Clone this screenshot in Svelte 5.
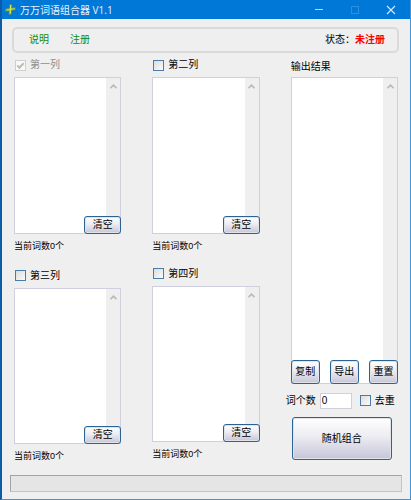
<script>
  let columns = $state([
    {
      id: "a",
      lists: [
        { id: "list1", title: "第一列", checked: true, disabled: true, text: "" },
        { id: "list3", title: "第三列", checked: false, disabled: false, text: "" },
      ],
    },
    {
      id: "b",
      lists: [
        { id: "list2", title: "第二列", checked: false, disabled: false, text: "" },
        { id: "list4", title: "第四列", checked: false, disabled: false, text: "" },
      ],
    },
  ])
  let output = $state("")
  let count = $state("0")
  let unique = $state(false)

  const words = text => text.split("\n").filter(line => line.trim())

  const combine = () => {
    const lists = columns
      .flatMap(column => column.lists)
      .filter(list => list.checked)
      .map(list => words(list.text))
      .filter(list => list.length)
    if (!lists.length) {
      return
    }
    let rows = Array.from({ length: Number(count) || 0 }, () =>
      lists.map(list => list[Math.floor(Math.random() * list.length)]).join("")
    )
    if (unique) {
      rows = [...new Set(rows)]
    }
    output = rows.join("\n")
  }

  const copy = () => navigator.clipboard?.writeText(output)

  const save = () => {
    const link = document.createElement("a")
    link.href = URL.createObjectURL(new Blob([output]))
    link.download = "output.txt"
    link.click()
  }

  const reset = () => {
    output = ""
    count = "0"
  }
</script>

{#snippet rail()}
  <span class="rail" aria-hidden="true">
    <svg width="7" height="5" viewBox="0 0 7 5">
      <path d="M0.5 4.2 L3.5 1.2 L6.5 4.2" fill="none" stroke="#b9b9b9" stroke-width="1.6" />
    </svg>
  </span>
{/snippet}

<div class="window">
  <header class="titlebar">
    <svg class="logo" width="11" height="11" viewBox="0 0 11 11">
      <path
        d="M4.6 0.6 L6.9 0.4 L6.8 3.9 L10.5 3.6 L10.4 5.8 L6.6 6.4 L6.2 10.4 L4 10.6 L4.1 6.9 L0.5 7.2 L0.6 5 L4.3 4.3 Z"
        fill="#b4cf4c"
        stroke="#4d8a4a"
        stroke-width="0.8"
      />
      <path d="M5.6 1.4 L5.2 9.2" stroke="#e6e98a" stroke-width="0.7" />
    </svg>
    <h1>万万词语组合器 V1.1</h1>
    <button class="caption" aria-label="最小化">
      <svg width="10" height="10" viewBox="0 0 10 10">
        <path d="M1 4.5 H9" stroke="#b5dcf8" />
      </svg>
    </button>
    <button class="caption" aria-label="最大化" disabled>
      <svg width="10" height="10" viewBox="0 0 10 10">
        <rect x="1.5" y="1.5" width="7" height="7" fill="none" stroke="#2c90e2" />
      </svg>
    </button>
    <button class="caption" aria-label="关闭">
      <svg width="10" height="10" viewBox="0 0 10 10">
        <path d="M1 1 L9 9 M9 1 L1 9" stroke="#d4eafb" stroke-width="1.1" />
      </svg>
    </button>
  </header>

  <nav class="toolbar">
    <a href="#help">说明</a>
    <a href="#register">注册</a>
    <span class="status">状态：<strong>未注册</strong></span>
  </nav>

  <main>
    {#each columns as column (column.id)}
      <div class="column {column.id}">
        {#each column.lists as list (list.id)}
          <section>
            <label class="heading check" class:disabled={list.disabled}>
              <input type="checkbox" bind:checked={list.checked} disabled={list.disabled} />
              {list.title}
            </label>
            <div class="field">
              <textarea aria-label={list.title} bind:value={list.text}></textarea>
              {@render rail()}
              <button class="push clear" onclick={() => (list.text = "")}>清空</button>
            </div>
            <p class="total">当前词数{words(list.text).length}个</p>
          </section>
        {/each}
      </div>
    {/each}

    <div class="result">
      <label class="heading output-label" for="output">输出结果</label>
      <div class="field">
        <textarea id="output" bind:value={output}></textarea>
        {@render rail()}
        <div class="actions">
          <button class="push" onclick={copy}>复制</button>
          <button class="push" onclick={save}>导出</button>
          <button class="push" onclick={reset}>重置</button>
        </div>
      </div>
      <div class="options">
        <label for="count">词个数</label>
        <input id="count" type="text" bind:value={count} />
        <label class="check">
          <input type="checkbox" bind:checked={unique} />
          去重
        </label>
      </div>
      <button class="push combine" onclick={combine}>随机组合</button>
    </div>
  </main>

  <div class="progress" role="progressbar" aria-label="进度" aria-valuenow="0"></div>
</div>

<style>
  :global(body) {
    background: #efefef;
  }

  .window {
    box-sizing: border-box;
    min-height: 100vh;
    display: flex;
    flex-direction: column;
    border: 1px solid #4294d6;
    border-top: 0;
    border-left: 2px solid #0b5ca6;
    background: #efefef;
    color: #000;
    font-family: "Liberation Sans", "Noto Sans CJK SC", sans-serif;
    font-size: 10px;
    line-height: 14px;
  }
  button,
  input,
  textarea {
    box-sizing: border-box;
    margin: 0;
    padding: 0;
    color: inherit;
    font: inherit;
  }

  /* Title bar */
  .titlebar {
    height: 19px;
    display: flex;
    align-items: center;
    padding: 0 1px 0 3px;
    background: #0078d7;
    color: #e6f3fd;
  }
  h1 {
    flex: 1;
    margin: 0 0 0 4px;
    font-family: "Open Sans", "Noto Sans CJK SC", sans-serif;
    font-size: 10px;
    font-weight: 400;
    line-height: 16px;
    white-space: nowrap;
  }
  .caption {
    width: 36px;
    height: 18px;
    display: flex;
    align-items: center;
    justify-content: center;
    border: 0;
    background: none;
  }

  /* Toolbar */
  .toolbar {
    display: flex;
    align-items: center;
    margin: 8px 11px 0 10px;
    padding: 4px 12px 4px 15px;
    border: 2px solid #dadada;
    border-radius: 5px;
    gap: 21px;
  }
  .toolbar a {
    color: #128a12;
    text-decoration: none;
  }
  .status {
    margin-left: auto;
  }
  .status strong {
    color: #f00;
  }

  /* Lists */
  main {
    flex: 1;
    display: grid;
    grid-template-columns: repeat(3, 1fr);
    gap: 31px;
    padding: 0 12px;
  }
  .column,
  section,
  .result {
    min-width: 0;
    display: flex;
    flex-direction: column;
  }
  .column {
    gap: 6px;
    padding-bottom: 7px;
  }
  .column.b {
    gap: 4px;
    padding-bottom: 9px;
  }
  section {
    flex: 1;
  }
  .heading {
    height: 24px;
  }
  .check {
    display: flex;
    align-items: center;
    gap: 4px;
  }
  .heading.check {
    padding-left: 1px;
  }
  .check.disabled {
    color: #8d8d8d;
  }
  .output-label {
    display: flex;
    align-items: flex-end;
    line-height: 20px;
  }
  .total {
    height: 24px;
    margin: 0;
    font-size: 9px;
    line-height: 24px;
  }
  .field {
    position: relative;
    flex: 1;
    display: flex;
    border: 1px solid #cfcfe0;
    background: #fff;
  }
  .field textarea {
    flex: 1;
    min-width: 0;
    border: 0;
    outline: 0;
    background: none;
    resize: none;
    overflow: hidden;
  }
  .rail {
    width: 14px;
    padding-top: 6px;
    background: #efefef;
    line-height: 0;
    text-align: center;
  }

  input[type="checkbox"] {
    appearance: none;
    width: 11px;
    height: 11px;
    border: 1px solid #4a7cab;
    background: linear-gradient(135deg, #dcdcd8, #fbfbfa);
  }
  input[type="checkbox"]:checked::before {
    content: "";
    display: block;
    width: 5px;
    height: 2px;
    margin: 2px 0 0 1px;
    border: solid #336;
    border-width: 0 0 2px 2px;
    transform: rotate(-45deg);
  }
  input[type="checkbox"]:disabled {
    border-color: #cfcfcb;
    background: #f8f8f8;
  }
  input[type="checkbox"]:disabled::before {
    border-color: #bcbcb4;
  }

  /* Buttons */
  .push {
    border: 1px solid #2a6394;
    border-radius: 3px;
    background: linear-gradient(#fff, #ececf2 45%, #c6c5d8);
    box-shadow: inset 0 0 0 1px #e0e3e8;
    white-space: nowrap;
  }
  .clear {
    position: absolute;
    right: -1px;
    bottom: -1px;
    width: 37px;
    height: 18px;
  }
  .actions {
    position: absolute;
    right: -1px;
    bottom: -1px;
    left: -1px;
    display: flex;
    justify-content: space-between;
  }
  .actions .push {
    width: 29px;
    height: 24px;
  }

  /* Result options */
  .result {
    padding-bottom: 15px;
  }
  .options {
    height: 33px;
    display: flex;
    align-items: center;
    gap: 4px;
    margin: 0 0 0 -5px;
    white-space: nowrap;
  }
  .options input[type="text"] {
    width: 32px;
    height: 16px;
    padding-left: 1px;
    border: 1px solid #cfcfe0;
    background: #fff;
  }
  .options .check {
    margin-left: 4px;
  }
  .combine {
    height: 43px;
    margin: 0 6px 0 1px;
  }

  .progress {
    height: 15px;
    margin: 0 8px 7px;
    border: 1px solid #c4c4c4;
    border-top-color: #a4a4a4;
    border-left-color: #a4a4a4;
    background: #e5e5e5;
  }
</style>
